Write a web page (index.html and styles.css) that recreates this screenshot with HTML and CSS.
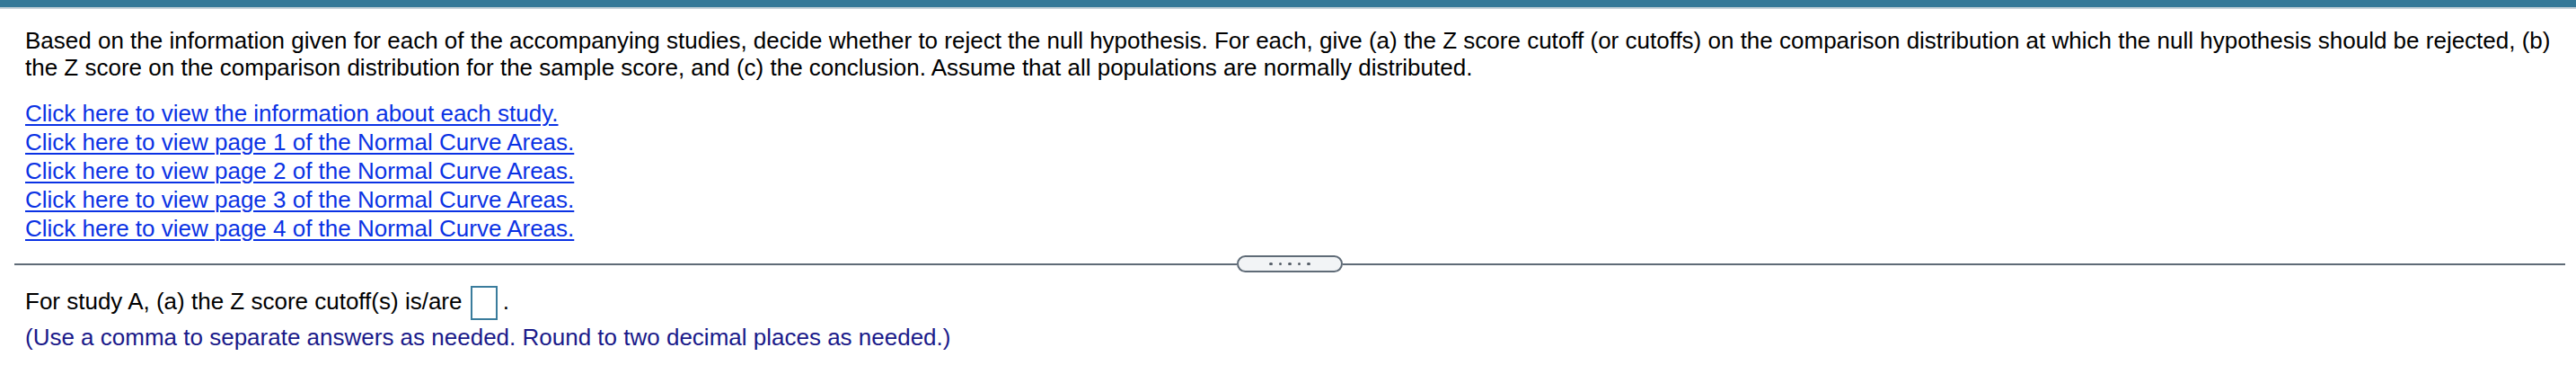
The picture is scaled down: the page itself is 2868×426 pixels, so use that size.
FILE: index.html
```html
<!DOCTYPE html>
<html lang="en">
<head>
<meta charset="utf-8">
<title>Hypothesis test question</title>
<link rel="stylesheet" href="styles.css">
</head>
<body>
<div class="topbar"></div>
<section class="intro">
  <p class="prompt">Based on the information given for each of the accompanying studies, decide whether to reject the null hypothesis. For each, give (a) the Z score cutoff (or cutoffs) on the comparison distribution at which the null hypothesis should be rejected, (b) the Z score on the comparison distribution for the sample score, and (c) the conclusion. Assume that all populations are normally distributed.</p>
  <div class="links">
    <a href="#" class="link">Click here to view the information about each study.</a>
    <a href="#" class="link">Click here to view page 1 of the Normal Curve Areas.</a>
    <a href="#" class="link">Click here to view page 2 of the Normal Curve Areas.</a>
    <a href="#" class="link">Click here to view page 3 of the Normal Curve Areas.</a>
    <a href="#" class="link">Click here to view page 4 of the Normal Curve Areas.</a>
  </div>
</section>
<div class="divider">
  <span class="rule"></span>
  <span class="pill"><i></i><i></i><i></i><i></i><i></i></span>
  <span class="rule"></span>
</div>
<section class="answer">
  <div class="question">For study A, (a) the Z score cutoff(s) is/are <span class="answer-box"></span>.</div>
  <div class="hint">(Use a comma to separate answers as needed. Round to two decimal places as needed.)</div>
</section>
</body>
</html>
```

FILE: styles.css
```css
html, body {
  margin: 0;
  padding: 0;
  background: #ffffff;
}

body {
  font-family: "Liberation Sans", Arial, sans-serif;
  font-size: 26px;
  color: #000000;
}

.topbar {
  height: 8px;
  background: #347898;
  border-bottom: 2px solid #c7d2d9;
}

.intro {
  padding: 20px 28px 0 28px;
}

.prompt {
  margin: 0;
  line-height: 30px;
}

.links {
  margin-top: 20px;
  display: flex;
  flex-direction: column;
  align-items: flex-start;
}

.link {
  display: block;
  line-height: 32px;
  color: #0a32e4;
  text-decoration: underline;
  text-decoration-thickness: 2px;
  text-underline-offset: 3px;
}

.divider {
  display: flex;
  align-items: center;
  margin: 14px 12px 0 16px;
  height: 19px;
}

.rule {
  flex: 1;
  height: 2px;
  background: #5f6b77;
}

.pill {
  width: 118px;
  height: 19px;
  box-sizing: border-box;
  border: 2px solid #5f6b77;
  border-radius: 10px;
  background: #f2f4f6;
  display: flex;
  align-items: center;
  justify-content: center;
  gap: 7px;
}

.pill i {
  width: 3.5px;
  height: 3.5px;
  border-radius: 50%;
  background: #555e68;
}

.answer {
  padding: 0 28px;
}

.question {
  margin-top: 15px;
  line-height: 30px;
}

.answer-box {
  display: inline-block;
  width: 30px;
  height: 38px;
  box-sizing: border-box;
  border: 2px solid #3a7c9c;
  background: #ffffff;
  vertical-align: middle;
  margin: 0 6px 0 2px;
}

.hint {
  margin-top: 4px;
  line-height: 30px;
  color: #1a1a8a;
}
```
